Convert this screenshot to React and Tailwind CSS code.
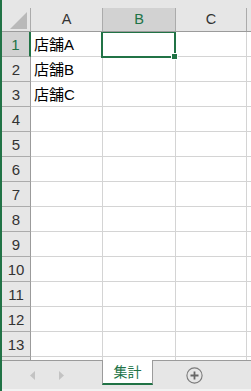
const COLS = [
  { key: 'A', w: 'w-[72px]' },
  { key: 'B', w: 'w-[73px]' },
  { key: 'C', w: 'w-[71px]' },
  { key: 'D', w: 'w-[72px]' },
];

const DATA = { 1: '店舗A', 2: '店舗B', 3: '店舗C' };

function ColHeader({ c }) {
  const selected = c.key === 'B';
  return (
    <div
      className={`${c.w} shrink-0 h-full flex items-center justify-center border-r border-[#ababab] ${
        selected ? 'bg-[#d2d2d2] text-[#217346]' : 'bg-[#e6e6e6] text-[#333]'
      }`}
    >
      {c.key === 'D' ? '' : c.key}
    </div>
  );
}

function Row({ n }) {
  const selected = n === 1;
  return (
    <div className="flex h-[25px] shrink-0">
      <div
        className={`w-[29px] shrink-0 flex items-center justify-center border-b border-[#ababab] ${
          selected
            ? 'bg-[#d2d2d2] text-[#217346] border-r-2 border-r-[#217346]'
            : 'bg-[#e6e6e6] text-[#333] border-r border-r-[#9b9b9b]'
        }`}
      >
        {n < 14 ? n : ''}
      </div>
      {COLS.map((c) => (
        <div
          key={c.key}
          className={`${c.w} shrink-0 relative border-r border-b border-[#d4d4d4] bg-white flex items-center pl-[3px] text-black whitespace-nowrap`}
        >
          {c.key === 'A' && DATA[n]}
          {c.key === 'B' && n === 1 && (
            <>
              <div className="absolute -left-[2px] -top-[1px] w-[75px] h-[27px] border-2 border-[#217346] z-10" />
              <div className="absolute left-[68px] top-[21px] w-[7px] h-[7px] bg-[#217346] border border-white z-20" />
            </>
          )}
        </div>
      ))}
    </div>
  );
}

export default function App() {
  return (
    <div
      className="w-[251px] h-[391px] flex flex-col overflow-hidden border-l-2 border-[#217346] bg-[#e6e6e6] text-[15px] leading-none"
      style={{ fontFamily: '"Liberation Sans", "Noto Sans CJK JP", sans-serif' }}
    >
      <div className="h-[8px] shrink-0 bg-[#e6e6e6]" />
      <div className="flex h-[24px] shrink-0 border-b border-[#9b9b9b] text-[14.5px]">
        <div className="w-[29px] shrink-0 relative border-r border-[#ababab] bg-[#e6e6e6]">
          <svg className="absolute left-[8px] top-[4px]" width="17" height="17" viewBox="0 0 17 17">
            <polygon points="17,0 17,17 0,17" fill="#b9b9b9" />
          </svg>
        </div>
        {COLS.map((c) => (
          <ColHeader key={c.key} c={c} />
        ))}
      </div>
      <div className="flex-1 overflow-hidden flex flex-col">
        {Array.from({ length: 14 }).map((_, i) => (
          <Row key={i} n={i + 1} />
        ))}
      </div>
      <div className="h-[31px] shrink-0 flex border-t border-[#9b9b9b] bg-[#e6e6e6] border-b-2 border-b-[#f2f2f2]">
        <div className="w-[100px] shrink-0 flex items-center gap-[24px] pl-[28px]">
          <svg width="5" height="9" viewBox="0 0 5 9">
            <polygon points="5,0 5,9 0,4.5" fill="#c3c3c3" />
          </svg>
          <svg width="5" height="9" viewBox="0 0 5 9">
            <polygon points="0,0 0,9 5,4.5" fill="#c3c3c3" />
          </svg>
        </div>
        <div className="-mt-px w-[51px] h-[25px] shrink-0 bg-white border-x border-[#9b9b9b] border-b-2 border-b-[#217346] flex items-center justify-center text-[#217346] text-[14px]">
          集計
        </div>
        <div className="flex-1 flex items-center pl-[33px]">
          <svg width="17" height="17" viewBox="0 0 17 17">
            <circle cx="8.5" cy="8.5" r="7.6" fill="none" stroke="#7a7a7a" strokeWidth="1.1" />
            <path d="M8.5 4.5v8M4.5 8.5h8" stroke="#666" strokeWidth="1.8" />
          </svg>
        </div>
      </div>
    </div>
  );
}
